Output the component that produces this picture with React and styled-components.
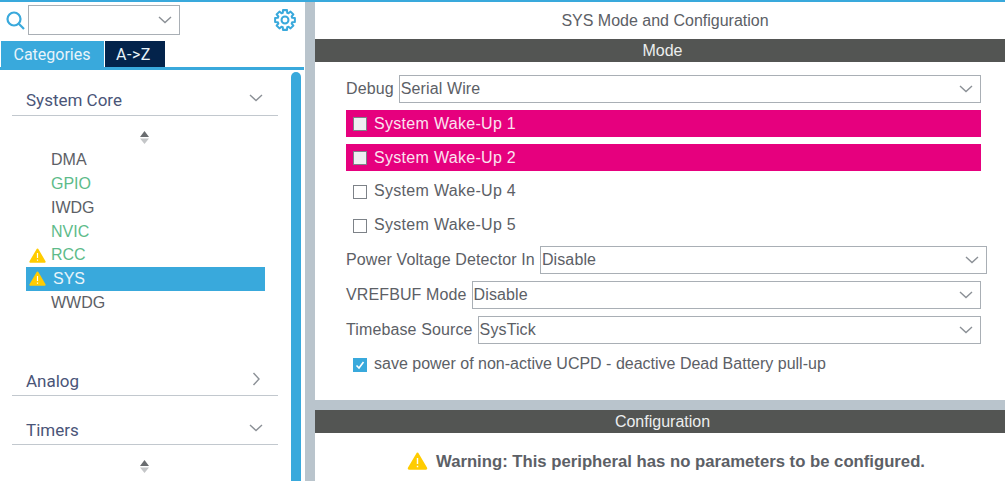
import React from 'react';
import styled, { createGlobalStyle } from 'styled-components';

const BLUE = '#39a9dc';
const NAVY = '#03234b';
const PINK = '#e6007e';
const TEXT = '#5c6066';
const GRAY = '#b9c4cc';

const Global = createGlobalStyle`
html, body { margin: 0; padding: 0; background: #fff; overflow: hidden; }
body { font-family: "Liberation Sans", Arial, sans-serif; }
`;

const Page = styled.div`
width: 1005px;
height: 481px;
overflow: hidden;
border-top: 2px solid ${BLUE};
box-sizing: border-box;
display: flex;
`;

const Sidebar = styled.div`
width: 305px;
flex: none;
display: flex;
flex-direction: column;
overflow: hidden;
`;

const SearchRow = styled.div`
height: 39px;
flex: none;
display: flex;
align-items: flex-start;
padding: 3px 9px 0 6px;
box-sizing: border-box;
`;

const SearchIcon = styled.svg`
width: 19px;
height: 19px;
margin: 6px 3px 0 0;
flex: none;
`;

const SearchSelect = styled.div`
width: 154px;
height: 30px;
box-sizing: border-box;
border: 1px solid #a9afb5;
display: flex;
align-items: center;
justify-content: flex-end;
padding-right: 7px;
`;

const GearIcon = styled.svg`
width: 22px;
height: 22px;
margin: 4px 0 0 94px;
flex: none;
`;

const Tabs = styled.div`
height: 29px;
flex: none;
display: flex;
align-items: flex-start;
padding-left: 1px;
gap: 1px;
border-bottom: 3px solid ${BLUE};
margin-right: 1px;
box-sizing: border-box;
`;

const Tab = styled.div`
height: 26px;
width: ${p => p.$width}px;
padding-right: ${p => p.$active ? 1 : 3}px;
box-sizing: border-box;
background: ${p => p.$active ? BLUE : NAVY};
color: #e8f4fa;
font: 16px/28px Roboto, sans-serif;
letter-spacing: ${p => p.$active ? 0 : 0.5}px;
text-align: center;
`;

const SideBody = styled.div`
flex: 1;
display: flex;
min-height: 0;
`;

const Tree = styled.div`
width: 291px;
flex: none;
padding: 0 13px 0 12px;
box-sizing: border-box;
`;

const Scrollbar = styled.div`
width: 10px;
margin-top: 2px;
background: ${BLUE};
border-radius: 5px 5px 0 0;
flex: none;
`;

const GroupHeader = styled.div`
height: ${p => p.$height}px;
box-sizing: border-box;
border-bottom: 1px solid #c2c8ce;
display: flex;
align-items: center;
justify-content: space-between;
padding: 0 15px 0 14px;
margin-top: ${p => p.$gap}px;
color: #4a5578;
font: 17px/20px Roboto, sans-serif;
`;

const HeaderText = styled.span`
display: block;
padding-top: ${p => p.$pad}px;
`;

const ChevronSlot = styled.span`
display: flex;
padding-top: ${p => p.$pad}px;
`;

const Spinner = styled.div`
height: 13px;
margin-top: 15px;
padding-right: 2px;
display: flex;
justify-content: center;
`;

const ItemList = styled.div`
margin: 4.5px 0 0 14px;
width: 239px;
`;

const Item = styled.div`
height: 23.75px;
display: flex;
align-items: center;
position: relative;
padding-left: ${p => p.$selected ? 27 : 25}px;
background: ${p => p.$selected ? BLUE : 'transparent'};
color: ${p => p.$selected ? '#e8f4fa' : p.$ok ? '#5dbb8a' : TEXT};
font-size: 16px;
`;

const ItemWarn = styled.span`
position: absolute;
left: 3px;
top: 4px;
display: flex;
`;

const Divider = styled.div`
width: 10px;
flex: none;
background: ${GRAY};
`;

const Main = styled.div`
flex: 1;
display: flex;
flex-direction: column;
min-width: 0;
`;

const Title = styled.div`
height: 37px;
flex: none;
padding-left: 10px;
text-align: center;
color: ${TEXT};
font-size: 16px;
line-height: 38px;
`;

const SectionBar = styled.div`
height: 23px;
flex: none;
padding-left: 5px;
background: #535553;
color: #eceeee;
text-align: center;
font-size: 16px;
line-height: 23px;
`;

const ModeBody = styled.div`
height: 338px;
flex: none;
padding: 13px 0 0 31px;
box-sizing: border-box;
display: flex;
flex-direction: column;
color: ${TEXT};
font-size: 16px;
`;

const FieldRow = styled.div`
height: 28px;
display: flex;
align-items: center;
margin-bottom: 7px;
width: ${p => p.$width ?? 635}px;
letter-spacing: 0.12px;
white-space: nowrap;
`;

const FieldSelect = styled.div`
flex: 1;
height: 28px;
margin-left: 5px;
box-sizing: border-box;
border: 1px solid #a9afb5;
display: flex;
align-items: center;
justify-content: space-between;
padding: 0 7px 0 1px;
`;

const CheckRow = styled.div`
height: 27px;
width: 635px;
padding-left: 7px;
margin-bottom: 7px;
box-sizing: border-box;
display: flex;
align-items: center;
gap: 7px;
background: ${p => p.$alert ? PINK : 'transparent'};
color: ${p => p.$alert ? '#fbe3f0' : TEXT};
letter-spacing: ${p => p.$small ? 0 : 0.3}px;
white-space: nowrap;
`;

const CheckLabel = styled.span`
display: block;
margin-top: ${p => p.$alert ? 0 : -2}px;
`;

const Box = styled.span`
width: 14px;
height: 14px;
flex: none;
box-sizing: border-box;
display: flex;
border: 1px solid ${p => p.$checked ? BLUE : '#7d8288'};
background: ${p => p.$checked ? BLUE : p.$alert ? '#eef0f2' : '#fff'};
`;

const Band = styled.div`
height: 10px;
flex: none;
background: ${GRAY};
`;

const Warning = styled.div`
flex: 1;
display: flex;
justify-content: center;
align-items: flex-start;
gap: 8px;
padding: 19px 0 0 12px;
color: ${TEXT};
font-size: 16.7px;
font-weight: bold;
line-height: 20px;
`;

const Chevron = ({ dir = 'down', size = 14, color = '#8b9096' }) => (
  <svg width={size} height={size} viewBox="0 0 14 14" fill="none" stroke={color} strokeWidth="1.4">
    {dir === 'down' ? <path d="M1 4l6 5.5L13 4" /> : <path d="M4.5 1l5.5 6-5.5 6" />}
  </svg>
);

const WarnIcon = ({ width = 17, height = 15 }) => (
  <svg width={width} height={height} viewBox="0 0 17 15">
    <path d="M8.5 .5c.5 0 .8.3 1 .7l7 12c.4.8-.1 1.6-1 1.6h-14c-.9 0-1.4-.8-1-1.6l7-12c.2-.4.5-.7 1-.7z" fill="#ffcc00" />
    <path d="M8.5 5v5M8.5 11.5v1.3" stroke="#fff" strokeWidth="1.2" />
  </svg>
);

const UpDown = () => (
  <svg width="11" height="13" viewBox="0 0 11 13">
    <path d="M5.5 0L10 6H1z" fill="#6a6d70" />
    <path d="M5.5 13L10 7.5H1z" fill="#c4c6c8" />
  </svg>
);

// gear outline built from eight teeth round a ring
const gearPath = (() => {
  const pts = [];
  for (let i = 0; i < 8; i++) {
    const a = (i * Math.PI) / 4;
    [[-0.3, 8.2], [-0.2, 11], [0.2, 11], [0.3, 8.2]].forEach(([da, r]) => {
      pts.push(`${(12 + r * Math.sin(a + da)).toFixed(2)} ${(12 - r * Math.cos(a + da)).toFixed(2)}`);
    });
  }
  return `M${pts.join('L')}Z`;
})();

const items = [
  { name: 'DMA' },
  { name: 'GPIO', ok: true },
  { name: 'IWDG' },
  { name: 'NVIC', ok: true },
  { name: 'RCC', ok: true, warn: true },
  { name: 'SYS', warn: true, selected: true },
  { name: 'WWDG' },
];

const wakeUps = [
  { name: 'System Wake-Up 1', alert: true },
  { name: 'System Wake-Up 2', alert: true },
  { name: 'System Wake-Up 4' },
  { name: 'System Wake-Up 5' },
];

export default function App() {
  return (
    <Page>
      <Global />
      <Sidebar>
        <SearchRow>
          <SearchIcon viewBox="0 0 19 19" fill="none" stroke={BLUE} strokeWidth="2.2">
            <circle cx="8" cy="8" r="6.5" />
            <path d="M12.8 12.8L18 18" />
          </SearchIcon>
          <SearchSelect><Chevron /></SearchSelect>
          <GearIcon viewBox="0 0 24 24" fill="none" stroke={BLUE} strokeWidth="2.2">
            <path d={gearPath} strokeLinejoin="round" />
            <circle cx="12" cy="12" r="3.8" />
          </GearIcon>
        </SearchRow>
        <Tabs>
          <Tab $active $width={103}>Categories</Tab>
          <Tab $width={60}>A-&gt;Z</Tab>
        </Tabs>
        <SideBody>
          <Tree>
            <GroupHeader $height={46} $gap={0}>
              <HeaderText $pad={15}>System Core</HeaderText>
              <ChevronSlot $pad={10}><Chevron /></ChevronSlot>
            </GroupHeader>
            <Spinner><UpDown /></Spinner>
            <ItemList>
              {items.map(item => (
                <Item key={item.name} $ok={item.ok} $selected={item.selected}>
                  {item.warn && <ItemWarn><WarnIcon /></ItemWarn>}
                  {item.name}
                </Item>
              ))}
            </ItemList>
            <GroupHeader $height={34} $gap={47.5}>
              <HeaderText $pad={4}>Analog</HeaderText>
              <ChevronSlot $pad={0}><Chevron dir="right" /></ChevronSlot>
            </GroupHeader>
            <GroupHeader $height={34} $gap={15}>
              <HeaderText $pad={4}>Timers</HeaderText>
              <ChevronSlot $pad={0}><Chevron /></ChevronSlot>
            </GroupHeader>
            <Spinner><UpDown /></Spinner>
          </Tree>
          <Scrollbar />
        </SideBody>
      </Sidebar>
      <Divider />
      <Main>
        <Title>SYS Mode and Configuration</Title>
        <SectionBar>Mode</SectionBar>
        <ModeBody>
          <FieldRow>
            Debug
            <FieldSelect>Serial Wire<Chevron /></FieldSelect>
          </FieldRow>
          {wakeUps.map(w => (
            <CheckRow key={w.name} $alert={w.alert}>
              <Box $alert={w.alert} />
              <CheckLabel $alert={w.alert}>{w.name}</CheckLabel>
            </CheckRow>
          ))}
          <FieldRow $width={641}>
            Power Voltage Detector In
            <FieldSelect>Disable<Chevron /></FieldSelect>
          </FieldRow>
          <FieldRow>
            VREFBUF Mode
            <FieldSelect>Disable<Chevron /></FieldSelect>
          </FieldRow>
          <FieldRow>
            Timebase Source
            <FieldSelect>SysTick<Chevron /></FieldSelect>
          </FieldRow>
          <CheckRow $small>
            <Box $checked>
              <svg width="12" height="12" viewBox="0 0 12 12" fill="none" stroke="#fff" strokeWidth="1.6">
                <path d="M2.5 6.5l2.5 2.5 4.5-6" />
              </svg>
            </Box>
            <CheckLabel>save power of non-active UCPD - deactive Dead Battery pull-up</CheckLabel>
          </CheckRow>
        </ModeBody>
        <Band />
        <SectionBar>Configuration</SectionBar>
        <Warning>
          <WarnIcon width={21} height={18} />
          Warning: This peripheral has no parameters to be configured.
        </Warning>
      </Main>
    </Page>
  );
}
